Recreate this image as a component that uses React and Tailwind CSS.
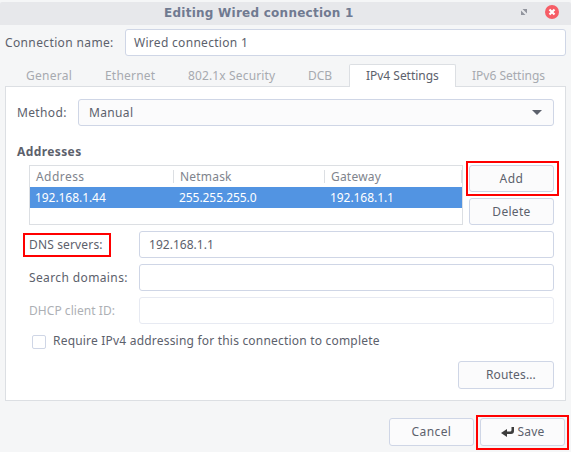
const field = "h-[27px] rounded-[3px] border border-[#cfd6e6] bg-white";
const button =
  "flex items-center justify-center rounded-[3px] border border-[#cfd6e6] bg-[#fbfbfc]";

function TitleBar() {
  return (
    <header className="mt-px flex h-[23px] items-center rounded-t-[2px] bg-[#e7e8eb] pb-[2px] pl-[164px]">
      <h1 className="w-[356px] whitespace-nowrap pt-px font-['DejaVu_Sans',sans-serif] text-[12px] font-bold tracking-[0.25px] text-[#707a91]">
        Editing Wired connection 1
      </h1>
      <svg className="mb-px" width="8" height="8" viewBox="0 0 8 8" fill="#92959e">
        <path d="M2.500 1H7v4.500zM1 2.500L5.500 7H1z" />
      </svg>
      <svg className="mb-px ml-[17px]" width="14" height="14" viewBox="0 0 14 14">
        <circle cx="7" cy="7" r="7" fill="#f65d66" />
        <path d="M4.500 4.500l5 5M9.500 4.500l-5 5" stroke="#fff" strokeWidth="2.200" />
      </svg>
    </header>
  );
}

function Tabs() {
  return (
    <nav className="relative z-10 -mb-px ml-[5px] mt-2 flex h-[23px] items-center whitespace-nowrap text-[#a7aab0]">
      <span className="w-[79px] pl-[21px] tracking-[0.25px]">General</span>
      <span className="w-[83px] pl-[21px] tracking-[0.2px]">Ethernet</span>
      <span className="w-[120px] pl-[21px] tracking-[0.14px]">802.1x Security</span>
      <span className="w-[62px] pl-[21px]">DCB</span>
      <span className="flex h-full w-[107px] items-center rounded-t-[2px] border border-b-0 border-[#dcdfe3] bg-white pb-px pl-4 tracking-[-0.02px] text-[#5c616c]">
        IPv4 Settings
      </span>
      <span className="pl-4">IPv6 Settings</span>
    </nav>
  );
}

function AddressTable() {
  return (
    <div className="h-[60px] w-[434px] border border-[#dcdfe3] text-[12px]">
      <div className="flex h-[21px] items-center text-[#80848d]">
        <span className="w-[143px] pl-[6px] tracking-[0.45px]">Address</span>
        <span className="h-[13px] w-[151px] border-l border-[#dcdfe3] pl-[6px] leading-[13px] tracking-[0.2px]">
          Netmask
        </span>
        <span className="h-[13px] w-[138px] border-x border-[#dcdfe3] pl-[6px] leading-[13px] tracking-[0.2px]">
          Gateway
        </span>
      </div>
      <div className="flex h-[21px] items-center bg-[#5294e2] tracking-[-0.06px] text-white">
        <span className="w-[143px] pl-[5px]">192.168.1.44</span>
        <span className="w-[151px] pl-[6px]">255.255.255.0</span>
        <span className="pl-[6px]">192.168.1.1</span>
      </div>
    </div>
  );
}

export default function App() {
  return (
    <main className="h-[452px] w-[571px] overflow-hidden bg-[#f5f6f7] pt-px font-['Noto_Sans',sans-serif] text-[12px] leading-[17px] text-[#5c616c]">
      <div className="-mt-px h-px" />
      <TitleBar />
      <div className="mt-1 flex items-center pl-[5px]">
        <span className="w-[120px] tracking-[0.37px]">Connection name:</span>
        <div className={`${field} flex w-[441px] items-center pl-2 tracking-[0.3px]`}>
          Wired connection 1
        </div>
      </div>
      <Tabs />
      <section className="ml-[5px] h-[315px] w-[561px] border border-[#dcdfe3] bg-white pl-[11px] pt-3">
        <div className="flex items-center">
          <span className="w-[61px] tracking-[0.35px]">Method:</span>
          <div className="flex h-[27px] w-[476px] items-center justify-between rounded-[3px] border border-[#cfd6e6] bg-[#fbfbfc] pl-[10px] pr-[11px] tracking-[0.35px]">
            Manual
            <svg width="10" height="5" viewBox="0 0 10 5" fill="#5c616c">
              <path d="M0 0h10L5 5z" />
            </svg>
          </div>
        </div>
        <h2 className="mt-[17px] h-[17px] font-bold tracking-[0.4px]">Addresses</h2>
        <div className="ml-3 mt-[5px] flex">
          <AddressTable />
          <div className="ml-[3px] mt-[-4px] flex flex-col">
            <div className="h-[35px] w-[93px] border-2 border-[#ff0000] p-[2px] pl-px">
              <div className={`${button} h-[27px] w-[85px] tracking-[0.6px]`}>Add</div>
            </div>
            <div className={`${button} ml-[3px] mt-[2px] h-[27px] w-[85px] tracking-[0.3px]`}>
              Delete
            </div>
          </div>
        </div>
        <div className="mt-[6px] flex items-center pl-[6px]">
          <div className="mr-7 flex h-6 w-[88px] items-center whitespace-nowrap border-2 border-[#ff0000] pl-1 tracking-[0.15px]">
            DNS servers:
          </div>
          <div className={`${field} flex w-[415px] items-center pl-[9px] tracking-[0.02px]`}>
            192.168.1.1
          </div>
        </div>
        <div className="mt-[6px] flex items-center pl-3">
          <span className="w-[110px] tracking-[0.38px]">Search domains:</span>
          <div className={`${field} w-[415px]`} />
        </div>
        <div className="mt-[6px] flex items-center pl-3">
          <span className="w-[110px] tracking-[0.05px] text-[#adb0b5]">DHCP client ID:</span>
          <div className="h-[27px] w-[415px] rounded-[3px] border border-[#e7eaf2] bg-white" />
        </div>
        <div className="mt-[8px] flex h-[17px] items-start pl-[15px]">
          <span className="mt-[3px] size-[14px] rounded-[2px] border border-[#cfd6e6]" />
          <span className="ml-[7px] tracking-[0.2px]">
            Require IPv4 addressing for this connection to complete
          </span>
        </div>
        <div className={`${button} ml-[441px] mt-3 h-7 w-24 pb-px pl-[10px] tracking-[0.15px]`}>
          Routes...
        </div>
      </section>
      <footer className="mt-[14px] flex pl-[389px]">
        <div className={`${button} mt-[3px] h-7 w-[85px] pb-[2px] tracking-[0.4px]`}>Cancel</div>
        <div className="ml-[2px] h-[35px] w-[93px] border-2 border-[#ff0000] pl-[2px] pt-px">
          <div className={`${button} h-7 w-[85px] gap-1 pb-[2px] tracking-[0.2px]`}>
            <svg className="mt-[2px]" width="13" height="10" viewBox="0 0 13 10" fill="#3c3c3c">
              <path d="M10.500 0H13v4Q13 7 10 7H6v3L0 6l6-4v2.500h3Q10.500 4.500 10.500 3z" />
            </svg>
            Save
          </div>
        </div>
      </footer>
    </main>
  );
}
